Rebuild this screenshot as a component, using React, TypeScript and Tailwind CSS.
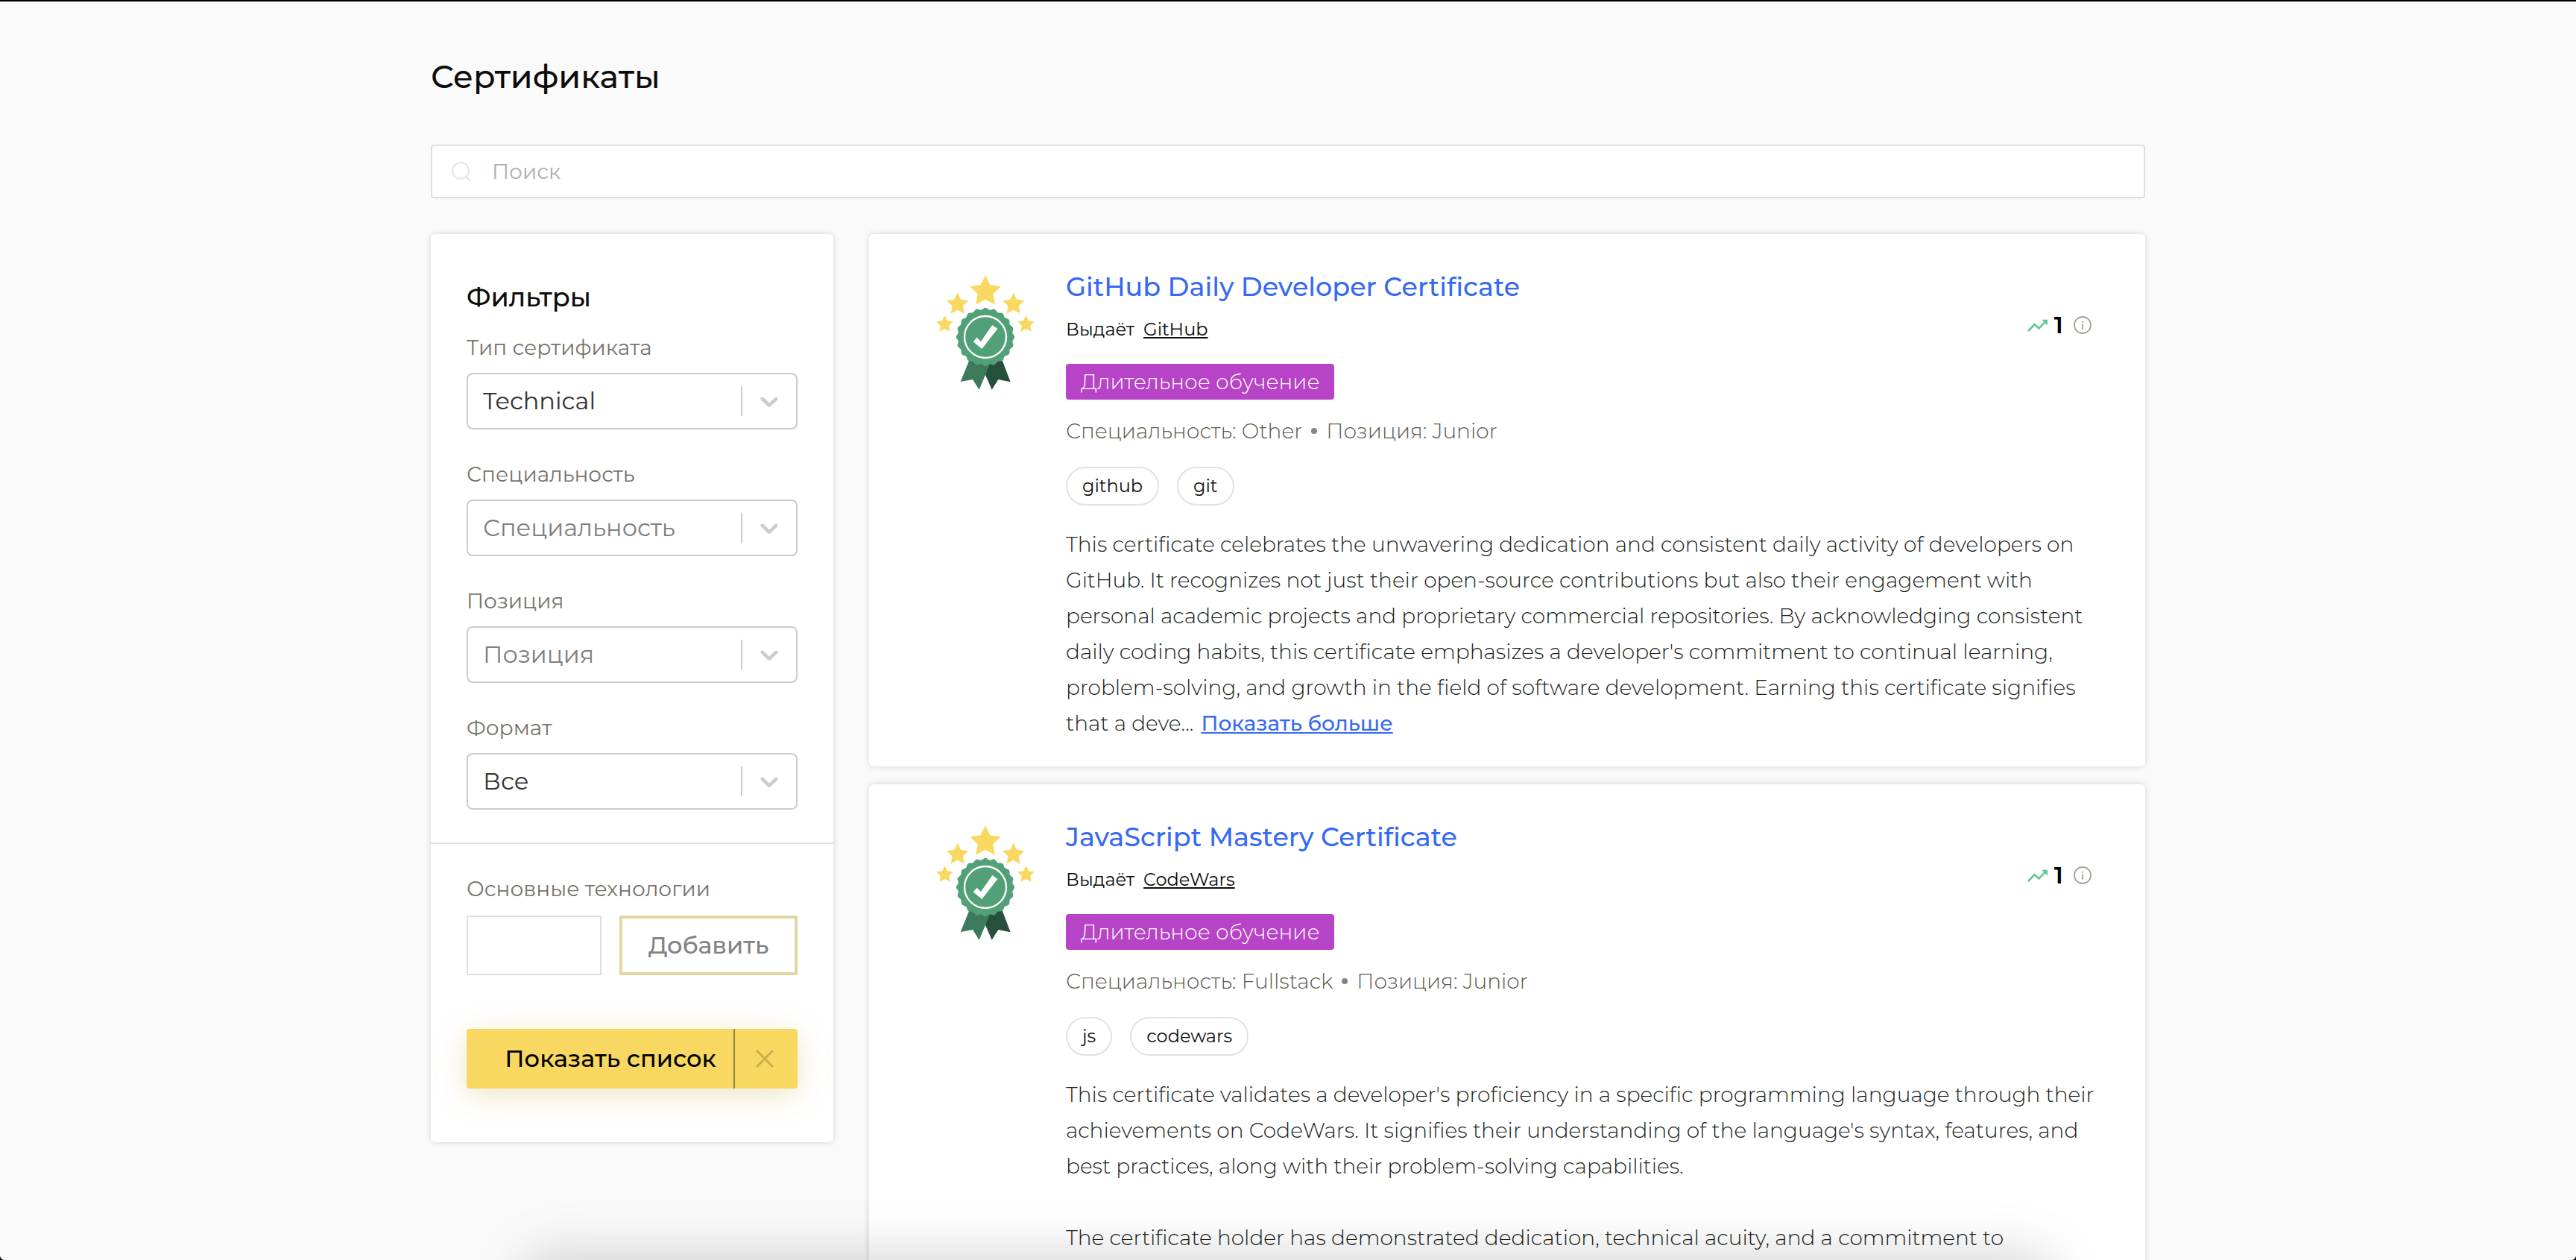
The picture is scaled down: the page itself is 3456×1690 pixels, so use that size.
import { Fragment, ReactNode, useId, useState } from 'react';

function starPoints(cx: number, cy: number, r: number) {
  return Array.from({ length: 10 }, (_, i) => {
    const a = -Math.PI / 2 + (i * Math.PI) / 5;
    const d = i % 2 === 0 ? r : r * 0.5;
    return `${(cx + d * Math.cos(a)).toFixed(1)},${(cy + d * Math.sin(a)).toFixed(1)}`;
  }).join(' ');
}

const rosettePoints = Array.from({ length: 240 }, (_, i) => {
  const a = (i * Math.PI) / 120;
  const r = 114 + 3.5 * Math.cos(20 * a);
  return `${(306 + r * Math.cos(a)).toFixed(1)},${(336 + r * Math.sin(a)).toFixed(1)}`;
}).join(' ');

function Rosette() {
  return (
    <svg viewBox="108 84 396 468" className="mt-1.5 h-[156px] w-[132px] shrink-0" aria-hidden="true">
      <g fill="#f9d861">
        <polygon points={starPoints(306, 153, 65)} />
        <polygon points={starPoints(194, 204, 46)} />
        <polygon points={starPoints(419, 204, 46)} />
        <polygon points={starPoints(142.5, 285, 36)} />
        <polygon points={starPoints(469.5, 285, 36)} />
      </g>
      <polygon points="374,430 407,517 358,507 332,548 306,488 320,430" fill="#264f3c" />
      <polygon points="241,430 206,516 255,507 281,548 328,436" fill="#3d7a5c" />
      <polygon points={rosettePoints} fill="#52a077" />
      <circle cx="306" cy="336" r="84" fill="none" stroke="#fff" strokeWidth="7" />
      <polygon points="257,355 272,338 288,354 334,288 355,303 292,384" fill="#fff" />
    </svg>
  );
}

function TrendIcon() {
  return (
    <svg viewBox="362 382 84 51" className="h-[17px] w-[28px]" aria-hidden="true">
      <path d="M365 430 391 403 408 419 434 393" fill="none" stroke="#63c897" strokeWidth="8" />
      <path d="M419 384h24v24z" fill="#63c897" />
    </svg>
  );
}

function InfoIcon() {
  return (
    <svg viewBox="0 0 24 24" className="block size-6" fill="none" stroke="#a8a294" strokeWidth="1.8" aria-hidden="true">
      <circle cx="12" cy="12" r="11" />
      <path d="M12 10.5v7.5M12 6.6v2.2" />
    </svg>
  );
}

function Field({ label, placeholder, options }: { label: string; placeholder?: string; options: string[] }) {
  const id = useId();
  const [value, setValue] = useState(placeholder ? '' : options[0]);
  return (
    <div>
      <label htmlFor={id} className="mb-3.5 block text-[28px] leading-10 text-[#77746b]">
        {label}
      </label>
      <div className="relative">
        <select
          id={id}
          value={value}
          onChange={(e) => setValue(e.target.value)}
          className={
            'block h-[76px] w-full appearance-none rounded-lg border-2 border-[#cccccc] bg-white pr-24 pl-5 text-[32px] ' +
            (value ? 'text-[#333333]' : 'text-[#808080]')
          }
        >
          {placeholder && <option value="">{placeholder}</option>}
          {options.map((o) => (
            <option key={o}>{o}</option>
          ))}
        </select>
        <div className="pointer-events-none absolute inset-y-0 right-0 flex items-center pr-[18px]">
          <span className="mr-4 h-10 w-0.5 bg-[#cccccc]" />
          <svg viewBox="0 0 20 20" className="size-10 fill-[#cccccc]" aria-hidden="true">
            <path d="M4.516 7.548c0.436-0.446 1.043-0.481 1.576 0l3.908 3.747 3.908-3.747c0.533-0.481 1.141-0.446 1.574 0 0.436 0.445 0.408 1.197 0 1.615-0.406 0.418-4.695 4.502-4.695 4.502-0.217 0.223-0.502 0.335-0.787 0.335s-0.57-0.112-0.789-0.335c0 0-4.287-4.084-4.695-4.502s-0.436-1.17 0-1.615z" />
          </svg>
        </div>
      </div>
    </div>
  );
}

function Filters() {
  return (
    <aside className="rounded-md bg-white shadow-[0_0_8px_rgba(0,0,0,0.16)]">
      <div className="border-b-2 border-[#dfdfdb] px-12 pt-[60px] pb-11">
        <h2 className="mb-[22px] text-[35px] leading-[50px] font-medium text-[#0c0c0b]">Фильтры</h2>
        <div className="flex flex-col gap-10">
          <Field label="Тип сертификата" options={['Technical']} />
          <Field label="Специальность" placeholder="Специальность" options={['Other', 'Fullstack']} />
          <Field label="Позиция" placeholder="Позиция" options={['Junior']} />
          <Field label="Формат" options={['Все']} />
        </div>
      </div>
      <div className="px-12 pt-10 pb-[72px]">
        <label htmlFor="tech" className="mb-4 block text-[28px] leading-10 text-[#77746b]">
          Основные технологии
        </label>
        <div className="flex gap-6">
          <input id="tech" type="text" className="h-20 min-w-0 flex-1 border-2 border-[#dfdfdc] bg-white px-4 text-[28px]" />
          <button type="button" className="h-20 w-[239px] border-4 border-[#e2d5a2] text-[32px] font-medium text-[#828282]">
            Добавить
          </button>
        </div>
        <div className="mt-[72px] flex h-20 rounded-sm bg-[#f8d861] shadow-[0_8px_40px_rgba(190,160,50,0.28)]">
          <button type="button" className="flex-1 pl-7 text-[32px] font-medium text-black">
            Показать список
          </button>
          <button
            type="button"
            aria-label="Сбросить"
            className="flex w-[86px] items-center justify-center border-l-2 border-[#94823f] pr-1"
          >
            <svg viewBox="0 0 24 24" className="size-6" stroke="#c9ae4e" strokeWidth="3" aria-hidden="true">
              <path d="M1 1 23 23M23 1 1 23" />
            </svg>
          </button>
        </div>
      </div>
    </aside>
  );
}

type Certificate = {
  title: string;
  issuer: string;
  specialty: string;
  position: string;
  tags: string[];
  lines: string[];
  more?: boolean;
};

const certificates: Certificate[] = [
  {
    title: 'GitHub Daily Developer Certificate',
    issuer: 'GitHub',
    specialty: 'Other',
    position: 'Junior',
    tags: ['github', 'git'],
    lines: [
      'This certificate celebrates the unwavering dedication and consistent daily activity of developers on',
      'GitHub. It recognizes not just their open-source contributions but also their engagement with',
      'personal academic projects and proprietary commercial repositories. By acknowledging consistent',
      "daily coding habits, this certificate emphasizes a developer's commitment to continual learning,",
      'problem-solving, and growth in the field of software development. Earning this certificate signifies',
      'that a deve...',
    ],
    more: true,
  },
  {
    title: 'JavaScript Mastery Certificate',
    issuer: 'CodeWars',
    specialty: 'Fullstack',
    position: 'Junior',
    tags: ['js', 'codewars'],
    lines: [
      "This certificate validates a developer's proficiency in a specific programming language through their",
      "achievements on CodeWars. It signifies their understanding of the language's syntax, features, and",
      'best practices, along with their problem-solving capabilities.',
      '',
      'The certificate holder has demonstrated dedication, technical acuity, and a commitment to',
    ],
  },
];

function Tag({ children }: { children: ReactNode }) {
  return (
    <li className="flex h-[52px] items-center rounded-full border-2 border-[#e2e2de] px-5 text-[24px] text-[#111111]">
      {children}
    </li>
  );
}

function CertificateCard({ item }: { item: Certificate }) {
  return (
    <article className="flex gap-[42px] rounded-md bg-white pt-12 pr-14 pb-[34px] pl-[90px] shadow-[0_0_8px_rgba(0,0,0,0.16)]">
      <Rosette />
      <div className="min-w-0 flex-1">
        <div className="flex justify-between">
          <div>
            <h3 className="text-[35px] leading-[46px] font-medium">
              <a href="#" className="text-[#376af0]">
                {item.title}
              </a>
            </h3>
            <p className="mt-[18px] flex gap-3 text-[24px] leading-8 text-[#0c0c0b]">
              <span>Выдаёт</span>
              <a href="#" className="underline decoration-2 underline-offset-2">
                {item.issuer}
              </a>
            </p>
          </div>
          <div className="mt-[54px] mr-4 flex h-10 items-center gap-2">
            <TrendIcon />
            <span className="text-[32px] leading-10 font-semibold text-black">1</span>
            <button type="button" aria-label="Информация" className="ml-1.5">
              <InfoIcon />
            </button>
          </div>
        </div>
        <span className="mt-[30px] block w-fit rounded-sm bg-[#b743c6] px-5 text-[28px] leading-[48px] font-light text-white">
          Длительное обучение
        </span>
        <p className="mt-5 flex items-center gap-3 text-[28px] leading-[44px] font-light text-[#5c594f]">
          <span>Специальность: {item.specialty}</span>
          <span className="size-2 rounded-full bg-[#85857f]" />
          <span>Позиция: {item.position}</span>
        </p>
        <ul className="mt-[26px] flex gap-6">
          {item.tags.map((t) => (
            <Tag key={t}>{t}</Tag>
          ))}
        </ul>
        <p className="mt-7 text-[28px] leading-[48px] font-light text-[#201f1c]">
          {item.lines.map((line, i) => (
            <Fragment key={i}>
              {i > 0 && <br />}
              {line}
            </Fragment>
          ))}
          {item.more && (
            <button type="button" className="ml-2.5 font-medium text-[#376af0] underline decoration-2 underline-offset-2">
              Показать больше
            </button>
          )}
        </p>
      </div>
    </article>
  );
}

export default function App() {
  return (
    <div className="h-screen overflow-hidden bg-black pt-0.5 font-['Montserrat','Inter',sans-serif]">
      <div className="relative h-full overflow-hidden rounded-b-md bg-[#fafafa]">
        <main className="mx-auto w-full max-w-[2300px] pt-[72px]">
          <h1 className="text-[43px] leading-[58px] font-medium text-[#0c0c0b]">Сертификаты</h1>
          <label className="mt-[62px] flex h-[72px] items-center gap-7 rounded-sm border-2 border-[#dfdfda] bg-white px-[26px]">
            <svg viewBox="0 0 26 26" className="size-[26px]" fill="none" stroke="#e6e6e4" strokeWidth="2" strokeLinecap="round" aria-hidden="true">
              <circle cx="12" cy="12" r="11" />
              <path d="m19 20 6 5.5" />
            </svg>
            <input
              type="search"
              aria-label="Поиск"
              placeholder="Поиск"
              className="min-w-0 flex-1 bg-transparent text-[28px] outline-none placeholder:text-[#aeaeae]"
            />
          </label>
          <div className="mt-12 grid grid-cols-[540px_minmax(0,1fr)] items-start gap-12">
            <Filters />
            <section className="flex flex-col gap-6">
              {certificates.map((c) => (
                <CertificateCard key={c.title} item={c} />
              ))}
            </section>
          </div>
        </main>
        <div className="pointer-events-none absolute inset-x-[710px] top-full h-24 rounded-3xl shadow-[0_0_70px_8px_rgba(0,0,0,0.17)]" />
      </div>
    </div>
  );
}
